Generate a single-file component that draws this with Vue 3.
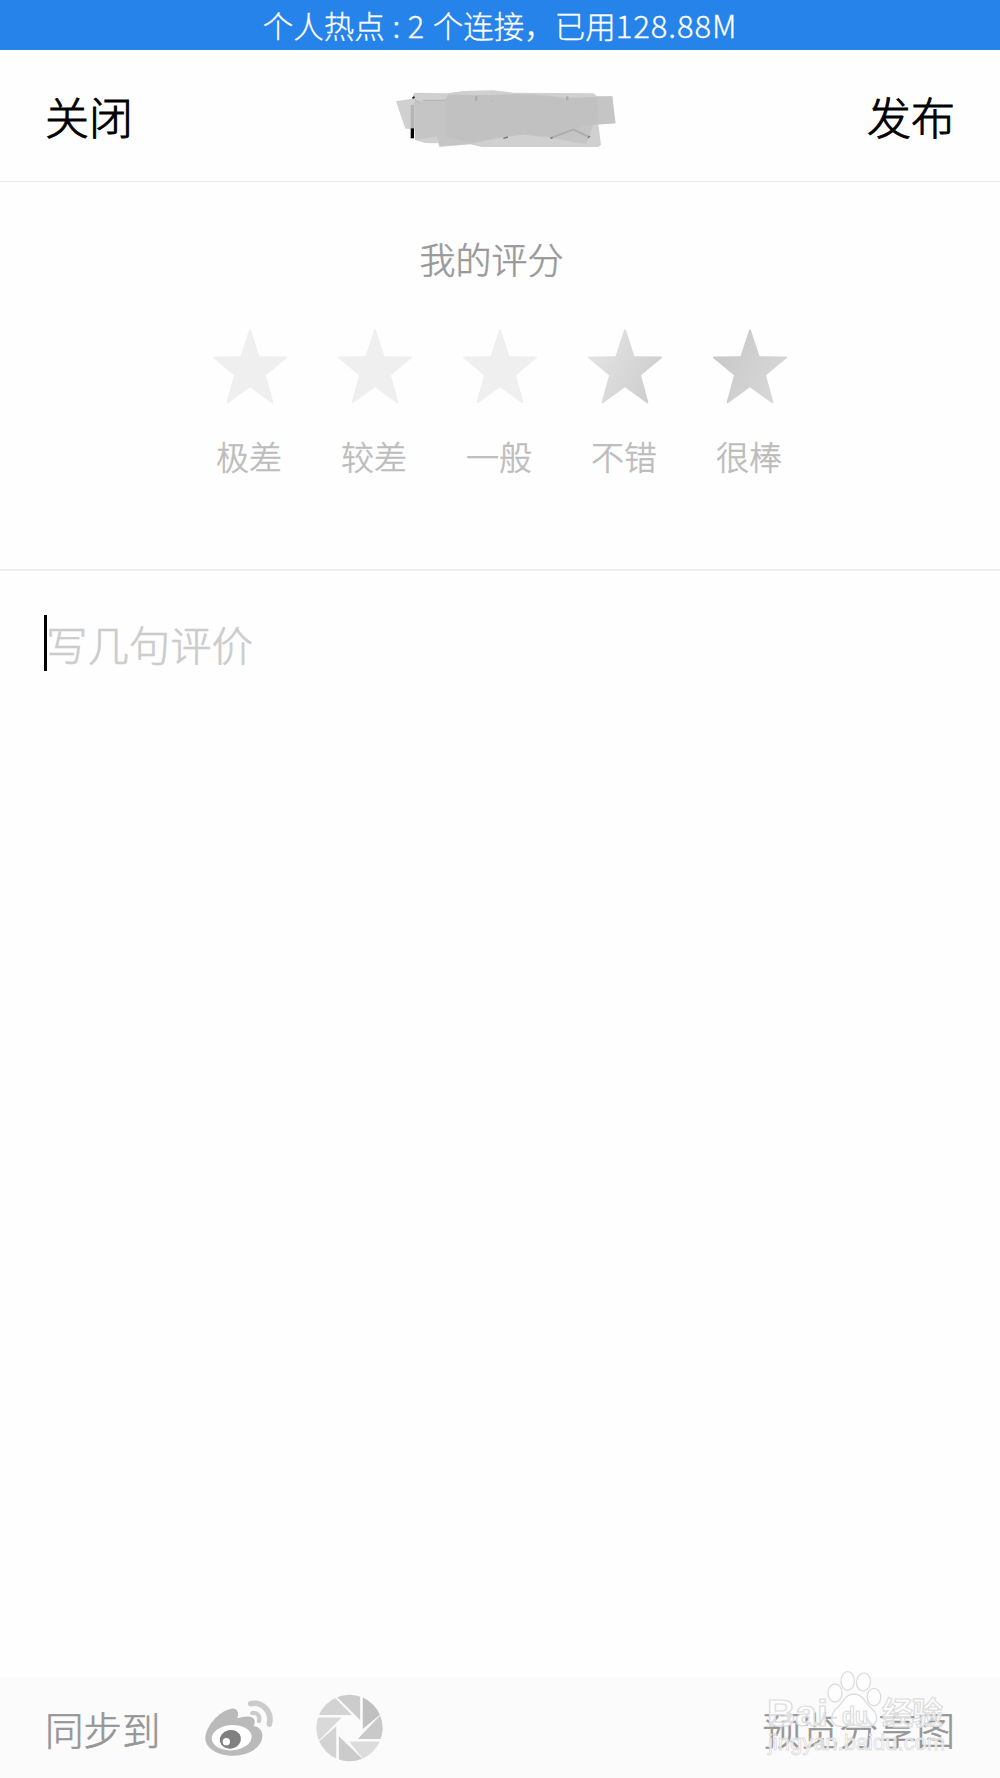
<script setup>
import { ref } from 'vue'

const review = ref('')

const ratings = [
  { label: '极差', fill: '#efefef' },
  { label: '较差', fill: '#efefef' },
  { label: '一般', fill: '#efefef' },
  { label: '不错', fill: 'url(#star-good)' },
  { label: '很棒', fill: 'url(#star-great)' },
]

const blades = [
  { points: '190,40 260,40 260,88 190,146', fill: '#c0c0c0' },
  { points: '256,88 260,176 175,176 242,105', fill: '#c9c9c9' },
  { points: '149,184 260,184 260,230 190,236', fill: '#dcdcdc' },
  { points: '118,168 188,236 180,260 118,260', fill: '#cbcbcb' },
  { points: '110,138 110,250 40,230 58,184', fill: '#d3d3d3' },
  { points: '40,111 127,111 58,180 40,180', fill: '#d9d9d9' },
  { points: '40,104 50,60 108,53 157,104', fill: '#d3d3d3' },
  { points: '113,50 130,36 182,36 182,119', fill: '#cccccc' },
]
</script>

<template>
  <div class="page">
    <div class="status-bar">
      <span class="status-label">个人热点</span>
      <span class="status-colon">:</span>
      <span class="status-count">2</span>
      <span class="status-label">个连接，已用</span>
      <span class="status-usage">128.88M</span>
    </div>

    <header class="nav">
      <button class="nav-button" type="button">关闭</button>
      <svg class="nav-title" viewBox="-15 -12 750 240" aria-hidden="true">
        <path d="M48 64L95 56L103 38L200 40L250 33L340 31L400 38L640 40L650 48L697 48L707 130L655 132L663 194L655 201L305 201L270 193L178 201L175 190L135 189L105 180L104 146L76 146Z" fill="#d0d0d0" />
        <path d="M103 62L193 60L205 44L330 45L400 42L470 43L560 53L648 50L697 50L705 130L640 135L618 193L515 174L430 164L370 172L270 192L180 198L170 170L105 180Z" fill="#c5c5c5" />
        <path d="M195 62L205 44L330 46L420 43L560 55L650 52L655 130L582 146L515 170L430 162L370 170L270 186L195 170Z" fill="#c1c1c1" />
        <path d="M92 75H102V145H92Z" fill="#b5b5b5" />
        <path d="M92 145H102V175H92Z" fill="#000" />
        <path d="M96 53L102 48L105 53L99 57Z" fill="#222" />
        <path d="M104 57L120 73M130 61H195M332 61L339 65" fill="none" stroke="#b3b3b3" stroke-width="3" />
        <path d="M512 174L580 149L628 171" fill="none" stroke="#aeaeae" stroke-width="6" />
        <path d="M285 49H292V62H285ZM558 49H565V61H558Z" fill="#ababab" />
        <path d="M370 175L384 171M511 175L518 173M624 174L630 168" stroke="#777" stroke-width="4" />
      </svg>
      <button class="nav-button" type="button">发布</button>
    </header>

    <section class="rating">
      <h2 class="rating-title">我的评分</h2>
      <svg class="defs" width="0" height="0">
        <defs>
          <linearGradient id="star-good" x1="0" y1="0.2" x2="1" y2="0.7">
            <stop offset="0" stop-color="#e5e5e5" />
            <stop offset="1" stop-color="#cdcdcd" />
          </linearGradient>
          <linearGradient id="star-great" x1="0" y1="0.2" x2="1" y2="0.7">
            <stop offset="0" stop-color="#c7c7c7" />
            <stop offset="1" stop-color="#d8d8d8" />
          </linearGradient>
        </defs>
      </svg>
      <ul class="stars">
        <li v-for="rating in ratings" :key="rating.label" class="star">
          <svg class="star-icon" viewBox="0 0 74 75">
            <path
              d="M36 1.2Q37 -.6 38 1.2L46.5 27.3L73 27.6Q75 28 73.5 29.2L53 46.3L60.3 73Q60.4 75 58.8 74L37 58.3L15.2 74Q13.6 75 13.7 73L21 46.3L.5 29.2Q-1 28 1 27.6L27.5 27.3Z"
              :fill="rating.fill"
            />
          </svg>
          <span class="star-label">{{ rating.label }}</span>
        </li>
      </ul>
    </section>

    <main class="editor">
      <span class="caret"></span>
      <span class="placeholder">{{ review || '写几句评价' }}</span>
    </main>

    <footer class="toolbar">
      <span class="toolbar-text">同步到</span>
      <svg class="weibo" viewBox="45 58 204 168">
        <path d="M46 174C45 140 86 91 124 84C141 82 148 94 142 113C157 108 181 103 190 113C196 120 195 128 191 136C209 140 218 151 217 167C216 201 174 225 130 225C84 225 48 204 46 174Z" fill="#bababa" />
        <ellipse cx="125" cy="171" rx="60" ry="38" fill="#fff" transform="rotate(-4 125 171)" />
        <ellipse cx="121" cy="176" rx="32" ry="28" fill="#808080" transform="rotate(-12 121 176)" />
        <circle cx="109" cy="183" r="11" fill="#fff" />
        <path d="M182 69C217 62 247 92 238 130" fill="none" stroke="#cbcbcb" stroke-width="17" stroke-linecap="round" />
        <path d="M187 97C202 94 211 106 207 121" fill="none" stroke="#cbcbcb" stroke-width="13" stroke-linecap="round" />
      </svg>
      <svg class="aperture" viewBox="49 41 202 204">
        <clipPath id="aperture-disc"><circle cx="150" cy="143" r="100" /></clipPath>
        <g clip-path="url(#aperture-disc)">
          <polygon v-for="blade in blades" :key="blade.points" :points="blade.points" :fill="blade.fill" />
        </g>
      </svg>
      <span class="toolbar-text preview">预览分享图</span>

      <svg class="watermark" viewBox="0 0 260 128" aria-hidden="true">
        <g class="watermark-ink">
          <ellipse cx="95" cy="43" rx="7" ry="9" />
          <ellipse cx="107.7" cy="31" rx="6.7" ry="9.3" />
          <ellipse cx="123.5" cy="32" rx="7" ry="9" transform="rotate(8 123.5 32)" />
          <ellipse cx="134" cy="47" rx="6.8" ry="8.7" />
          <path d="M114 44C123 44 125 53 131 58C137 63 139 71 133 75C127 79 121 75 114 75C107 75 101 79 95 75C89 70 92 62 98 57C104 52 105 44 114 44Z" />
          <text class="watermark-brand" x="27" y="76" textLength="61" lengthAdjust="spacingAndGlyphs">Bai</text>
          <text class="watermark-du" x="102" y="74" textLength="26" lengthAdjust="spacingAndGlyphs">du</text>
          <text class="watermark-cjk" x="142" y="74" textLength="61">经验</text>
          <text class="watermark-url" x="28" y="100" textLength="177">jingyan.baidu.com</text>
        </g>
      </svg>
    </footer>
  </div>
</template>

<style>
body {
  margin: 0;
  background: #fefefe;
}
</style>

<style scoped>
.page {
  display: flex;
  flex-direction: column;
  width: 1000px;
  height: 1778px;
  overflow: hidden;
  background: #fefefe;
  font-family: 'Noto Sans CJK SC', sans-serif;
  font-weight: 300;
  -webkit-text-stroke: 0.6px currentColor;
}

.status-bar {
  flex: 0 0 50px;
  display: flex;
  align-items: center;
  justify-content: center;
  background: #2683e9;
  color: #fff;
  font-size: 30.5px;
  line-height: 50px;
  white-space: nowrap;
  -webkit-text-stroke-width: 0.3px;
}

.status-colon {
  width: 23px;
  text-align: center;
}

.status-count {
  width: 25px;
}

.status-usage {
  font-size: 31px;
  letter-spacing: 0.9px;
}

.nav {
  flex: 0 0 132px;
  box-sizing: border-box;
  display: flex;
  align-items: center;
  justify-content: space-between;
  padding: 0 45px;
  border-bottom: 1px solid #e9e9e9;
}

.nav-button {
  padding: 0;
  border: 0;
  background: none;
  color: #000;
  font: inherit;
  font-size: 44px;
  line-height: 64px;
  -webkit-text-stroke: 0.9px currentColor;
}

.nav-title {
  width: 250px;
  height: 80px;
}

.rating {
  flex: 0 0 389px;
  box-sizing: border-box;
  display: flex;
  flex-direction: column;
  align-items: center;
  border-bottom: 2px solid #eee;
}

.rating-title {
  margin: 49px 17px 0 0;
  color: #999;
  font-size: 36px;
  font-weight: 300;
  line-height: 54px;
}

.defs {
  flex: none;
}

.stars {
  display: flex;
  margin: 44px 0 0;
  padding: 0;
  list-style: none;
}

.star {
  display: flex;
  flex-direction: column;
  align-items: center;
  width: 125px;
}

.star-icon {
  width: 74px;
  height: 75px;
}

.star-label {
  margin: 27px 2px 0 0;
  color: #bcbcbc;
  font-size: 33px;
  line-height: 50px;
}

.editor {
  flex: 1;
  display: flex;
  align-items: flex-start;
  padding: 44px 44px 0;
}

.caret {
  width: 3px;
  height: 56px;
  background: #000;
}

.placeholder {
  margin-left: -1px;
  color: #ccc;
  font-size: 41.4px;
  line-height: 57px;
}

.toolbar {
  position: relative;
  flex: 0 0 100px;
  display: flex;
  align-items: center;
  padding: 0 45px;
  background: #fbfbfc;
}

.toolbar-text {
  color: #969696;
  font-size: 38.5px;
  line-height: 56px;
}

.weibo {
  width: 68px;
  height: 56px;
  margin-left: 44px;
}

.aperture {
  width: 67px;
  height: 68px;
  margin-left: 43px;
}

.preview {
  margin-left: auto;
}

.watermark {
  position: absolute;
  right: 0;
  bottom: 0;
  width: 260px;
  height: 128px;
}

.watermark-ink {
  fill: rgba(255, 255, 255, 0.72);
  stroke: #dcdcdc;
  stroke-width: 1.3px;
  -webkit-text-stroke: 0;
}

.watermark-ink text {
  stroke: #dcdcdc;
  stroke-width: 1.2px;
}

.watermark-brand {
  font: bold 37px 'Liberation Sans', sans-serif;
}

.watermark-du {
  font: bold 24px 'Liberation Sans', sans-serif;
}

.watermark-cjk {
  font: bold 31px 'Noto Sans CJK SC', sans-serif;
}

.watermark-ink .watermark-url {
  font: 22px 'Liberation Sans', sans-serif;
  stroke-width: 0.8px;
}
</style>
